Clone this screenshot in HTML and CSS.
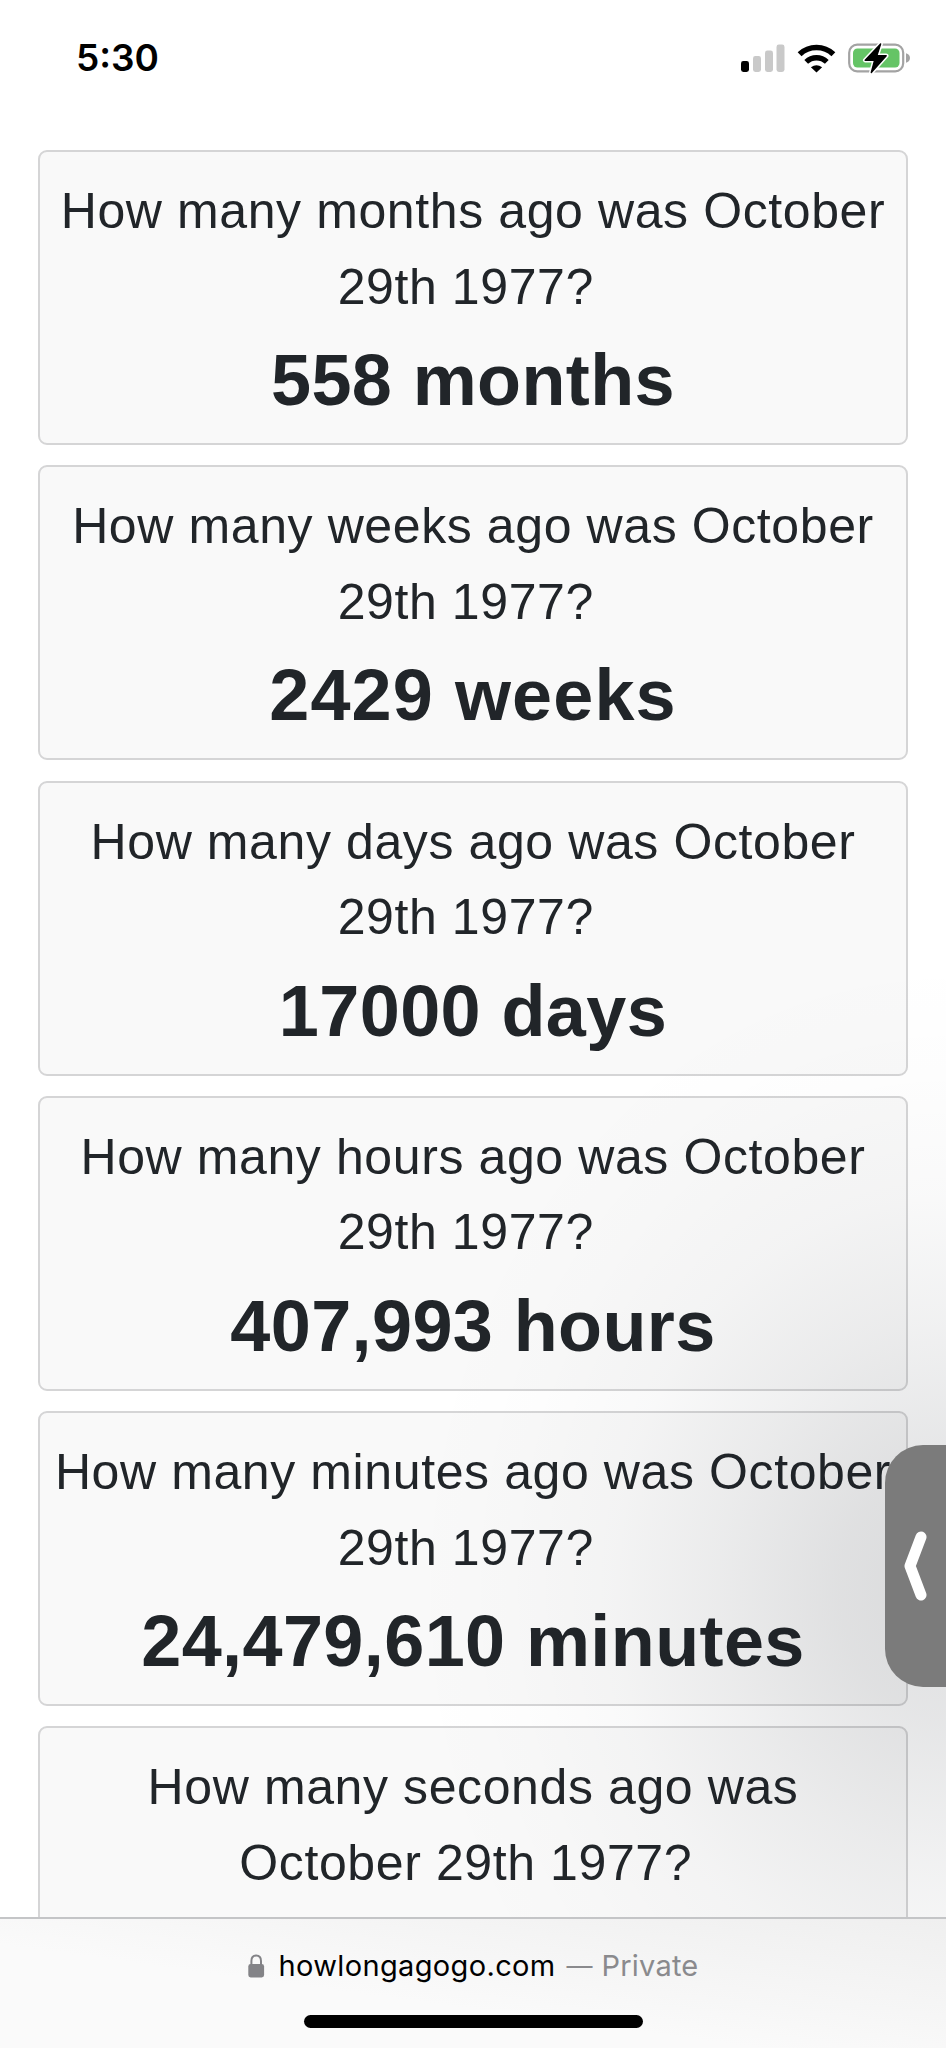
FILE: index.html
```
<!DOCTYPE html>
<html lang="en">
<head>
  <meta charset="UTF-8">
  <meta name="viewport" content="width=device-width, initial-scale=1.0">
  <title>How long ago was October 29th 1977?</title>
  <link rel="stylesheet" href="styles.css">
</head>
<body>

  <header class="status-bar">
    <span class="time">5:30</span>
    <div class="status-icons">
      <svg class="signal" width="44" height="30" viewBox="0 0 44 30">
        <rect x="0" y="18" width="8" height="11" rx="2.4" fill="#000"/>
        <rect x="12" y="13" width="8" height="16" rx="2.4" fill="#c9c9c9"/>
        <rect x="24" y="7.5" width="8" height="21.5" rx="2.4" fill="#c9c9c9"/>
        <rect x="35.5" y="1.5" width="8" height="27.5" rx="2.4" fill="#c9c9c9"/>
      </svg>
      <svg class="wifi" width="39" height="29" viewBox="0 0 39 29">
        <path d="M2.600 10.300A24.500 24.500 0 0 1 36.400 10.300" fill="none" stroke="#000" stroke-width="5.600"/>
        <path d="M9.200 17.900A15 15 0 0 1 29.800 17.900" fill="none" stroke="#000" stroke-width="5.400"/>
        <path d="M13.900 23.300Q19.500 19 25.100 23.300L19.500 28.600Z" fill="#000"/>
      </svg>
      <svg class="battery" width="63" height="32" viewBox="0 0 63 32">
        <rect x="1.200" y="2.700" width="54" height="26.600" rx="8" fill="#fff" stroke="#a3a3a3" stroke-width="2.200"/>
        <rect x="5" y="6.500" width="46.500" height="19" rx="4.500" fill="#65c466"/>
        <path d="M58 11.200Q62 12.500 62 16Q62 19.500 58 20.800Z" fill="#a3a3a3"/>
        <path d="M32.600 2L17.200 18.200H26.600L23.300 30.500L38.200 13.800H28.800Z" fill="#000" stroke="#fff" stroke-width="4.500" stroke-linejoin="round"/>
        <path d="M32.600 2L17.200 18.200H26.600L23.300 30.500L38.200 13.800H28.800Z" fill="#000" stroke="#000" stroke-width="1.400" stroke-linejoin="round"/>
      </svg>
    </div>
  </header>

  <main class="results">
    <div class="card">
      <p class="question">How many months ago was October 29th&nbsp;1977?&nbsp;</p>
      <p class="answer">558 months</p>
    </div>
    <div class="card">
      <p class="question">How many weeks ago was October 29th&nbsp;1977?&nbsp;</p>
      <p class="answer wide">2429 weeks</p>
    </div>
    <div class="card">
      <p class="question">How many days ago was October 29th&nbsp;1977?&nbsp;</p>
      <p class="answer">17000 days</p>
    </div>
    <div class="card">
      <p class="question">How many hours ago was October 29th&nbsp;1977?&nbsp;</p>
      <p class="answer">407,993 hours</p>
    </div>
    <div class="card">
      <p class="question">How many minutes ago was October 29th&nbsp;1977?&nbsp;</p>
      <p class="answer">24,479,610 minutes</p>
    </div>
    <div class="card">
      <p class="question">How many seconds ago was October 29th&nbsp;1977?&nbsp;</p>
    </div>
  </main>

  <div class="shade"></div>

  <div class="drawer">
    <svg width="24" height="72" viewBox="0 0 24 72">
      <path d="M18 7L7 36L18 65" fill="none" stroke="#fff" stroke-width="11" stroke-linecap="round" stroke-linejoin="round"/>
    </svg>
  </div>

  <footer class="address-bar">
    <div class="address">
      <svg class="lock" width="17" height="24" viewBox="0 0 17 24">
        <path d="M3.400 11V7Q3.400 1.500 8.200 1.500T13 7V11" fill="none" stroke="#838387" stroke-width="2"/>
        <rect x="0.300" y="10" width="15.800" height="13.500" rx="2.400" fill="#838387"/>
      </svg>
      <span class="domain">howlongagogo.com</span>
      <span class="dash">—</span>
      <span class="private">Private</span>
    </div>
    <div class="home-indicator"></div>
  </footer>

</body>
</html>
```

FILE: styles.css
```
* {
  box-sizing: border-box;
}

body {
  position: relative;
  display: flex;
  flex-direction: column;
  height: 2048px;
  margin: 0;
  overflow: hidden;
  background-color: #fff;
  font-family: "Liberation Sans", Arial, sans-serif;
  color: #212529;
}

.status-bar {
  display: flex;
  justify-content: space-between;
  flex-shrink: 0;
  height: 150px;
  padding: 35px 35px 0 76px;
  font-family: Inter, sans-serif;
  color: #000;
}

.time {
  font-size: 37px;
  font-weight: 600;
  line-height: 46px;
}

.status-icons {
  display: flex;
  align-items: center;
  height: 46px;
}

.wifi {
  margin-left: 12px;
}

.battery {
  margin-left: 12px;
}

.results {
  flex: 1;
  min-height: 0;
  overflow: hidden;
  padding: 0 38px;
}

.card {
  height: 295px;
  margin-bottom: 20.3px;
  padding: 22px 11px 0;
  border: 2px solid #d5d5d6;
  border-radius: 9px;
  background-color: #f9f9f9;
  text-align: center;
}

.question {
  margin: 0;
  font-size: 50px;
  line-height: 75.5px;
  letter-spacing: 0.6px;
}

.answer {
  margin: 1px 0 0;
  font-size: 72px;
  font-weight: bold;
  line-height: 108px;
  letter-spacing: 0.4px;
}

.wide {
  letter-spacing: 1.1px;
}

/* soft shadow cast by the drawer */
.shade {
  position: absolute;
  top: 900px;
  right: 0;
  width: 560px;
  height: 1017px;
  background: radial-gradient(540px 640px at 100% 690px, rgba(10, 15, 25, 0.135) 0%, rgba(10, 15, 25, 0.105) 20%, rgba(10, 15, 25, 0.06) 42%, rgba(10, 15, 25, 0.025) 62%, rgba(10, 15, 25, 0.008) 82%, rgba(10, 15, 25, 0) 100%);
}

.drawer {
  position: absolute;
  top: 1445px;
  right: 0;
  display: flex;
  align-items: center;
  width: 61px;
  height: 242px;
  padding-left: 18px;
  border-radius: 38px 0 0 38px;
  background-color: #7b7b7b;
}

.address-bar {
  display: flex;
  flex-direction: column;
  align-items: center;
  flex-shrink: 0;
  height: 131px;
  border-top: 2px solid #c4c5c7;
  background: linear-gradient(to bottom left, #efefef, #fafafa 60%);
  font-family: Inter, sans-serif;
}

.address {
  display: flex;
  align-items: center;
  height: 40px;
  margin: 27px 0 29px;
  font-size: 29px;
  line-height: 40px;
}

.lock {
  margin-right: 14px;
}

.domain {
  color: #000;
  letter-spacing: 0.35px;
}

.dash,
.private {
  color: #8a8a8d;
}

.dash {
  margin-left: 11px;
  font-size: 26px;
}

.private {
  margin-left: 9px;
  letter-spacing: 0.2px;
}

.home-indicator {
  width: 339px;
  height: 13px;
  border-radius: 7px;
  background-color: #000;
}
```
